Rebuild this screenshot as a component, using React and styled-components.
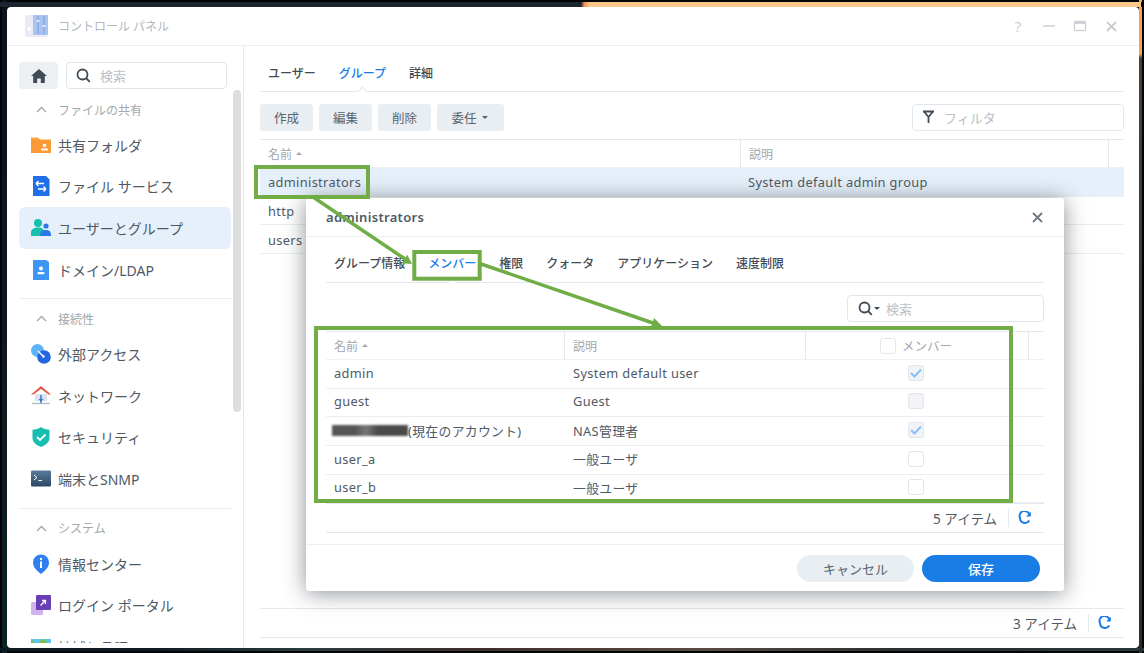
import React from "react";
import styled, { createGlobalStyle } from "styled-components";

const Global = createGlobalStyle`
  html, body { margin: 0; padding: 0; background: #000; }
  * { box-sizing: border-box; }
  body { font-family: "Noto Sans", "Noto Sans CJK JP", sans-serif; }
`;

const line = "#e3e9ef";
const textColor = "#4f5964";
const blue = "#1a7de6";
const green = "#70ad47";

const Desktop = styled.div`
  position: relative;
  width: 1144px;
  height: 653px;
  overflow: hidden;
  padding: 7px 5px 5px 7px;
  background:
    linear-gradient(90deg, #1c2430 0 581px, #f08a4a 584px, #fac98a 590px 1141px, #000 1141px) 0 2px / 100% 5px no-repeat,
    linear-gradient(180deg, #f2a45e 0 54px, #4a4038 58px, #2c2c30 100%) 1139px 0 / 3px 100% no-repeat,
    linear-gradient(90deg, #0e1a22 0 150px, #2a3c40 300px, #40302c 480px, #5a4c44 700px, #2c3030 900px, #28383c 100%) 0 648px / 100% 3px no-repeat,
    linear-gradient(180deg, #0b1220, #0e2028) 2px 0 / 5px 100% no-repeat,
    #020304;
`;

const Win = styled.div`
  position: relative;
  width: 1132px;
  height: 641px;
  background: #fff;
  border-radius: 4px;
  display: flex;
  flex-direction: column;
  overflow: hidden;
`;

const TitleBar = styled.header`
  height: 39px;
  flex: none;
  display: flex;
  align-items: center;
  padding: 0 20px 0 18px;
  border-bottom: 1px solid #eceff3;
`;
const TitleText = styled.span`
  margin-left: 10px;
  font-size: 12px;
  color: #b4b8bd;
  flex: 1;
`;
const WinButtons = styled.div`
  display: flex;
  align-items: center;
  gap: 15px;
`;
const WinBtn = styled.span`
  width: 16px;
  display: flex;
  justify-content: center;
  font-size: 15px;
  color: #cdd1d5;
`;

const Body = styled.div`
  flex: 1;
  display: flex;
  min-height: 0;
`;

const Sidebar = styled.aside`
  position: relative;
  width: 237px;
  flex: none;
  border-right: 1px solid ${line};
  display: flex;
  flex-direction: column;
  padding-bottom: 5px;
`;
const SideTop = styled.div`
  display: flex;
  gap: 8px;
  padding: 16px 16px 7px 12px;
`;
const HomeBtn = styled.div`
  width: 39px;
  height: 27px;
  border-radius: 4px;
  background: #ecf0f3;
  display: flex;
  align-items: center;
  justify-content: center;
`;
const SearchBox = styled.div`
  flex: ${p => (p.$w ? "none" : 1)};
  width: ${p => (p.$w ? p.$w + "px" : "auto")};
  height: 27px;
  border: 1.5px solid #dfe6ec;
  border-radius: 4px;
  display: flex;
  align-items: center;
  gap: ${p => p.$gap || 8}px;
  padding-left: ${p => p.$pad || 9}px;
  padding-bottom: 1px;
  font-size: 13px;
  color: #bcc0c4;
  background: #fff;
`;
const Nav = styled.nav`
  flex: 1;
  min-height: 0;
  overflow: hidden;
  padding: 0 12px;
`;
const ScrollThumb = styled.div`
  position: absolute;
  right: 2px;
  top: 44px;
  width: 8px;
  height: 322px;
  border-radius: 4px;
  background: #dedede;
`;
const Group = styled.section`
  padding-bottom: 8px;
  margin-bottom: 6px;
  border-bottom: 1px solid #e8edf2;
`;
const GroupHead = styled.div`
  height: 27px;
  margin-bottom: 1px;
  display: flex;
  align-items: center;
  gap: 11px;
  padding-left: 17px;
  font-size: 12px;
  color: #a3a8ad;
`;
const Item = styled.div`
  height: 41.6px;
  display: flex;
  align-items: center;
  gap: 7px;
  padding-left: 12px;
  border-radius: 6px;
  font-size: 14px;
  color: ${textColor};
  background: ${p => (p.$active ? "#e6f0fa" : "transparent")};
`;

const Main = styled.main`
  flex: 1;
  min-width: 0;
  display: flex;
  flex-direction: column;
  padding: 0 15px 10px 16px;
`;
const Tabs = styled.div`
  height: 46px;
  flex: none;
  display: flex;
  align-items: stretch;
  gap: 23px;
  padding: ${p => p.$pt}px 0 0 8px;
  border-bottom: 1px solid ${line};
`;
const Tab = styled.div`
  position: relative;
  display: flex;
  align-items: center;
  font-size: 12px;
  font-weight: 500;
  color: ${p => (p.$active ? blue : "#414b55")};
  &::after {
    content: "";
    display: ${p => (p.$active ? "block" : "none")};
    position: absolute;
    left: 50%;
    bottom: -4px;
    width: 6px;
    height: 6px;
    margin-left: -3px;
    background: #fff;
    border-top: 1px solid ${line};
    border-left: 1px solid ${line};
    transform: rotate(45deg);
  }
`;
const Toolbar = styled.div`
  flex: none;
  margin-top: 12px;
  display: flex;
  gap: 6px;
  justify-content: flex-start;
`;
const ToolBtn = styled.div`
  height: 27px;
  width: ${p => p.$w || 53}px;
  border-radius: 3px;
  background: #e9eef2;
  display: flex;
  align-items: center;
  justify-content: center;
  gap: 5px;
  padding-right: ${p => (p.$w ? 2 : 0)}px;
  font-size: 12.5px;
  color: #59636d;
`;
const Push = styled.div`
  flex: 1;
`;
const Caret = styled.i`
  display: inline-block;
  width: 0;
  height: 0;
  border-left: 3.5px solid transparent;
  border-right: 3.5px solid transparent;
  ${p => (p.$up ? "border-bottom" : "border-top")}: 3.5px solid ${p => p.$c || "#59636d"};
  margin-left: ${p => p.$ml || 0}px;
  vertical-align: middle;
`;

const Grid = styled.div`
  flex: ${p => (p.$fill ? 1 : "none")};
  margin-top: ${p => p.$mt}px;
  border-top: 1px solid ${line};
  min-height: 0;
`;
const HeadRow = styled.div`
  height: 28px;
  display: grid;
  grid-template-columns: ${p => p.$cols};
  border-bottom: 1px solid #eef1f5;
`;
const HeadCell = styled.div`
  display: flex;
  align-items: center;
  justify-content: ${p => (p.$center ? "center" : "flex-start")};
  gap: ${p => (p.$center ? 6 : 0)}px;
  padding-left: ${p => (p.$center ? 0 : 8)}px;
  padding-right: ${p => (p.$center ? 2 : 0)}px;
  font-size: ${p => (p.$center ? 12.5 : 12)}px;
  color: #a3a8ad;
  & + & {
    border-left: 1px solid ${line};
  }
`;
const Row = styled.div`
  height: 28.67px;
  display: grid;
  grid-template-columns: ${p => p.$cols};
  align-items: center;
  padding-top: ${p => p.$pt || 0}px;
  padding-bottom: ${p => p.$pb || 0}px;
  font-size: 12.8px;
  letter-spacing: 0.35px;
  color: ${textColor};
  background: ${p => (p.$selected ? "#e6f0fa" : "transparent")};
  border-bottom: 1px solid #eaeef2;
`;
const Cell = styled.div`
  padding-left: ${p => p.$pad || 8}px;
  padding-right: ${p => (p.$center ? 3 : 0)}px;
  white-space: nowrap;
  display: flex;
  align-items: center;
  justify-content: ${p => (p.$center ? "center" : "flex-start")};
`;
const Redacted = styled.span`
  display: inline-block;
  width: 76px;
  height: 11px;
  margin-left: -2px;
  background: linear-gradient(90deg, #555 0 30%, #777 45%, #4a4a4a 60% 100%);
  filter: blur(1.2px);
`;
const GridFooter = styled.div`
  flex: none;
  height: 30px;
  border-top: 1px solid ${line};
  border-bottom: 1px solid ${line};
  display: flex;
  align-items: center;
  justify-content: flex-end;
  padding-right: 12px;
  font-size: 13.5px;
  color: ${textColor};
`;
const FooterSep = styled.span`
  width: 1px;
  height: 18px;
  margin: 0 9px 0 11px;
  background: ${line};
`;

const Dialog = styled.div`
  position: absolute;
  left: 299px;
  top: 191px;
  width: 758px;
  height: 393px;
  background: #fff;
  border-radius: 3px;
  box-shadow: 0 2px 22px rgba(40, 50, 60, 0.55);
  display: flex;
  flex-direction: column;
`;
const DialogHead = styled.div`
  flex: none;
  height: 39px;
  display: flex;
  align-items: center;
  justify-content: space-between;
  padding: 0 21px 0 20px;
  border-bottom: 1px solid #eceff3;
  font-size: 13px;
  letter-spacing: 0.3px;
  font-weight: 600;
  color: #4f5964;
`;
const DialogBody = styled.div`
  flex: none;
  padding: 0 20px;
`;
const DialogSearchRow = styled.div`
  display: flex;
  justify-content: flex-end;
  margin-top: 12px;
`;
const DialogFoot = styled.div`
  flex: none;
  margin-top: 11px;
  padding: 10px 24px 0 0;
  border-top: 1px solid #eceff3;
  display: flex;
  justify-content: flex-end;
  gap: 8px;
`;
const Pill = styled.div`
  width: ${p => p.$w}px;
  height: 27px;
  padding-bottom: 1px;
  border-radius: 14px;
  display: flex;
  align-items: center;
  justify-content: center;
  font-size: 13px;
  font-weight: ${p => (p.$primary ? 500 : 400)};
  color: ${p => (p.$primary ? "#fff" : "#59636d")};
  background: ${p => (p.$primary ? blue : "#e9eef2")};
`;
const Box = styled.span`
  width: 16px;
  height: 16px;
  flex: none;
  border: 1.5px solid ${p => (p.$plain ? "#e2e8ee" : "#e0e6ec")};
  border-radius: 3px;
  background: ${p => (p.$disabled ? "#f1f3f7" : "#fff")};
  display: flex;
  align-items: center;
  justify-content: center;
`;
const Overlay = styled.svg`
  position: absolute;
  left: 0;
  top: 0;
  pointer-events: none;
`;

const S = ({ size = 20, children, ...r }) => (
  <svg width={size} height={size} viewBox="0 0 20 20" style={{ flex: "none" }} {...r}>{children}</svg>
);

const FolderIcon = () => (
  <S><path d="M0 2.500h7l2 2h11v13.500H0z" fill="#f9a63f" /><path d="M0 5h9l2 0h9v13H0z" fill="#fb9a35" />
    <circle cx="13.500" cy="10.500" r="1.800" fill="#fff" /><rect x="10" y="13.500" width="7" height="2" rx=".8" fill="#fff" /></S>
);
const FileSvcIcon = () => (
  <S><path d="M2 0h13l3.500 3.500V20H2z" fill="#1f6fe8" /><path d="M5 7.500h8M5 7.500l2.500-2.500M5 7.500l2.500 2.500M15 13H7M15 13l-2.500-2.500M15 13l-2.500 2.500" stroke="#fff" strokeWidth="1.400" fill="none" /></S>
);
const UsersIcon = () => (
  <S><circle cx="7" cy="5" r="4" fill="#16bfae" /><path d="M0 18v-3.500C0 11 3 9.500 7 9.500s6 1.500 7 5V18z" fill="#16bfae" />
    <circle cx="15" cy="8" r="2.600" fill="#2b79e8" /><path d="M9 18c0-4 2-6 6-6s5 2 5 6z" fill="#2b79e8" /></S>
);
const DomainIcon = () => (
  <S><path d="M2 0h13l3 2v18H2z" fill="#3e96f4" /><circle cx="10" cy="8.500" r="2" fill="#fff" /><rect x="6.500" y="12" width="7" height="2.200" rx="1" fill="#fff" /></S>
);
const ExternalIcon = () => (
  <S><circle cx="6.500" cy="6.500" r="6.500" fill="#5cb4f7" /><circle cx="13" cy="13" r="6.800" fill="#2366e0" /><path d="M7 7l6 6" stroke="#fff" strokeWidth="1.500" /><circle cx="12.500" cy="12.500" r="1.200" fill="#fff" /></S>
);
const NetworkIcon = () => (
  <S><path d="M4 8h12v7H4z" fill="#dfe2e6" /><path d="M10 0L20 8.500h-2.500L10 3 2.500 8.500H0z" fill="#e25a4c" /><path d="M10 9v8" stroke="#2b79e8" strokeWidth="1.500" /><path d="M7.500 13h5l-2.500 3z" fill="#2b79e8" /><path d="M1 17.500h18" stroke="#b6bcc4" strokeWidth="1.400" /></S>
);
const ShieldIcon = () => (
  <S><path d="M10 0c2.500 1.800 5.500 2.600 8.500 2.800V11c0 4.200-4 7.200-8.500 9-4.500-1.800-8.500-4.800-8.500-9V2.800C4.500 2.600 7.500 1.800 10 0z" fill="#18bfb1" /><path d="M6 10l3 3 5.500-5.500" stroke="#fff" strokeWidth="1.800" fill="none" /></S>
);
const TerminalIcon = () => (
  <svg width="20" height="17" viewBox="0 0 20 17" style={{ flex: "none" }}>
    <defs><linearGradient id="tg" x1="0" y1="0" x2="0" y2="1"><stop offset="0" stopColor="#5b7a99" /><stop offset="1" stopColor="#2d4866" /></linearGradient></defs>
    <rect width="20" height="16" y=".5" rx="1" fill="url(#tg)" /><path d="M3 5l3 2.500-3 2.500M7.500 10.500H11" stroke="#fff" strokeWidth="1" fill="none" />
  </svg>
);
const InfoIcon = () => (
  <S><path d="M10 20C6 16.500 2 13.500 2 8.500a8 8 0 0116 0c0 5-4 8-8 11.500z" fill="#2d7ff0" /><rect x="9" y="7.500" width="2" height="6.500" fill="#fff" /><circle cx="10" cy="5" r="1.200" fill="#fff" /></S>
);
const PortalIcon = () => (
  <S><rect x="0" y="7" width="12" height="13" rx="1.500" fill="#cfb4ee" /><rect x="5" y="0" width="15" height="15" rx="1" fill="#6a3fb5" /><path d="M9.500 10.500l5-5M11 5.500h3.500V9" stroke="#fff" strokeWidth="1.300" fill="none" /></S>
);
const RegionIcon = () => (
  <S><rect y="2" width="20" height="18" fill="#7ac143" /><path d="M0 2l6 7 5-7zM13 2h7v8z" fill="#63c3ef" /></S>
);
const Chevron = () => (
  <svg width="11" height="7" viewBox="0 0 11 7" style={{ flex: "none" }}><path d="M1 6l4.500-4.500L10 6" stroke="#a3a8ad" strokeWidth="1.400" fill="none" /></svg>
);
const SearchIcon = () => (
  <svg width="15" height="15" viewBox="0 0 15 15" style={{ flex: "none" }}><circle cx="6.500" cy="6.500" r="5" stroke="#414b55" strokeWidth="1.800" fill="none" /><path d="M10 10l3.800 3.800" stroke="#414b55" strokeWidth="1.800" /></svg>
);
const CloseIcon = ({ c = "#c8ccd0", s = 11 }) => (
  <svg width={s} height={s} viewBox="0 0 11 11" style={{ flex: "none" }}><path d="M1 1l9 9M10 1l-9 9" stroke={c} strokeWidth="1.800" /></svg>
);
const Refresh = () => (
  <svg width="14" height="14" viewBox="0 0 14 14" style={{ flex: "none" }}><path d="M11.500 4.200A5 5 0 102 7a5 5 0 009.300 2.500" stroke={blue} strokeWidth="2" fill="none" /><path d="M12.800 0.800v4.700H8.200z" fill={blue} /></svg>
);
const Check = () => (
  <svg width="12" height="10" viewBox="0 0 12 10"><path d="M1 5l3.500 3.500L11 1.500" stroke="#8cc0f5" strokeWidth="2" fill="none" /></svg>
);

const groups = [
  { title: "ファイルの共有", items: [["共有フォルダ", FolderIcon], ["ファイル サービス", FileSvcIcon], ["ユーザーとグループ", UsersIcon, true], ["ドメイン/LDAP", DomainIcon]] },
  { title: "接続性", items: [["外部アクセス", ExternalIcon], ["ネットワーク", NetworkIcon], ["セキュリティ", ShieldIcon], ["端末とSNMP", TerminalIcon]] },
  { title: "システム", items: [["情報センター", InfoIcon], ["ログイン ポータル", PortalIcon], ["地域と言語", RegionIcon]] },
];
const mainCols = "480px 368px 1fr";
const dlgCols = "238px 241px 223px 1fr";
const groupsRows = [["administrators", "System default admin group", true], ["http", ""], ["users", ""]];
const members = [
  { n: "admin", d: "System default user", checked: true, disabled: true },
  { n: "guest", d: "Guest", disabled: true },
  { n: "(現在のアカウント)", d: "NAS管理者", checked: true, disabled: true, hidden: true },
  { n: "user_a", d: "一般ユーザ" },
  { n: "user_b", d: "一般ユーザ" },
];

export default function App() {
  return (
    <Desktop>
      <Global />
      <Win>
        <TitleBar>
          <svg width="23" height="22" viewBox="0 0 23 22" style={{ flex: "none" }}>
            <rect width="23" height="22" rx="2" fill="#e9ecf6" />
            <rect x="8" width="15" height="20" rx="1" fill="#a9c4f0" />
            <path d="M13 1v18M19 1v18" stroke="#7d9fdc" strokeWidth="1" />
            <rect x="11.500" y="5" width="3" height="2" fill="#dfe8fa" /><rect x="17.500" y="10" width="3" height="2" fill="#dfe8fa" />
            <circle cx="4" cy="14" r="2" fill="#fff" />
          </svg>
          <TitleText>コントロール パネル</TitleText>
          <WinButtons>
            <WinBtn>?</WinBtn>
            <WinBtn><svg width="16" height="12" viewBox="0 0 16 12"><path d="M2 6h12" stroke="#cdd1d5" strokeWidth="1.600" /></svg></WinBtn>
            <WinBtn><svg width="16" height="12" viewBox="0 0 16 12"><rect x="2.500" y="1.500" width="11" height="9" fill="none" stroke="#cdd1d5" strokeWidth="1.300" /><rect x="2" y="1" width="12" height="3" fill="#cdd1d5" /></svg></WinBtn>
            <WinBtn><CloseIcon /></WinBtn>
          </WinButtons>
        </TitleBar>
        <Body>
          <Sidebar>
            <SideTop>
              <HomeBtn>
                <svg width="16" height="14" viewBox="0 0 16 14"><path d="M8 0L0 7h2.200v7h4V9.500h3.600V14h4V7H16z" fill="#414b55" /></svg>
              </HomeBtn>
              <SearchBox $gap={9}><SearchIcon />検索</SearchBox>
            </SideTop>
            <Nav>
              {groups.map(g => (
                <Group key={g.title}>
                  <GroupHead><Chevron />{g.title}</GroupHead>
                  {g.items.map(([label, Icon, active]) => (
                    <Item key={label} $active={active}><Icon />{label}</Item>
                  ))}
                </Group>
              ))}
            </Nav>
            <ScrollThumb />
          </Sidebar>
          <Main>
            <Tabs $pt={9}>
              <Tab>ユーザー</Tab>
              <Tab $active>グループ</Tab>
              <Tab>詳細</Tab>
            </Tabs>
            <Toolbar>
              <ToolBtn>作成</ToolBtn>
              <ToolBtn>編集</ToolBtn>
              <ToolBtn>削除</ToolBtn>
              <ToolBtn $w={67}>委任<Caret /></ToolBtn>
              <Push />
              <SearchBox $w={212} $gap={9}>
                <svg width="13" height="14" viewBox="0 0 13 14" style={{ flex: "none" }}><path d="M1 1.500h11M2 1.500l4.500 5.500M11 1.500L6.500 7M6.500 6.500V13" stroke="#414b55" strokeWidth="1.800" fill="none" /></svg>
                フィルタ
              </SearchBox>
            </Toolbar>
            <Grid $fill $mt={8}>
              <HeadRow $cols={mainCols}>
                <HeadCell>名前<Caret $up $c="#a3a8ad" $ml={4} /></HeadCell>
                <HeadCell>説明</HeadCell>
                <HeadCell />
              </HeadRow>
              {groupsRows.map(([n, d, sel]) => (
                <Row key={n} $cols={mainCols} $selected={sel} $pt={1}>
                  <Cell>{n}</Cell>
                  <Cell>{d}</Cell>
                </Row>
              ))}
            </Grid>
            <GridFooter>3 アイテム<FooterSep /><Refresh /></GridFooter>
          </Main>
        </Body>
        <Dialog>
          <DialogHead>administrators<CloseIcon c="#6f7882" /></DialogHead>
          <DialogBody>
            <Tabs $pt={7}>
              <Tab>グループ情報</Tab>
              <Tab $active>メンバー</Tab>
              <Tab>権限</Tab>
              <Tab>クォータ</Tab>
              <Tab>アプリケーション</Tab>
              <Tab>速度制限</Tab>
            </Tabs>
            <DialogSearchRow>
              <SearchBox $w={197} $gap={6} $pad={10}>
                <SearchIcon /><Caret $c="#414b55" $ml={-5} />検索
              </SearchBox>
            </DialogSearchRow>
            <Grid $mt={9}>
              <HeadRow $cols={dlgCols}>
                <HeadCell>名前<Caret $up $c="#a3a8ad" $ml={4} /></HeadCell>
                <HeadCell>説明</HeadCell>
                <HeadCell $center><Box $plain />メンバー</HeadCell>
                <HeadCell />
              </HeadRow>
              {members.map(m => (
                <Row key={m.n} $cols={dlgCols} $pb={2}>
                  <Cell>{m.hidden && <Redacted />}{m.n}</Cell>
                  <Cell $pad={9}>{m.d}</Cell>
                  <Cell $center $pad={1}>
                    <Box $disabled={m.disabled}>{m.checked && <Check />}</Box>
                  </Cell>
                </Row>
              ))}
            </Grid>
            <GridFooter>5 アイテム<FooterSep /><Refresh /></GridFooter>
          </DialogBody>
          <DialogFoot>
            <Pill $w={117}>キャンセル</Pill>
            <Pill $w={118} $primary>保存</Pill>
          </DialogFoot>
        </Dialog>
      </Win>
      <Overlay width="1144" height="653" viewBox="0 0 1144 653">
        <g fill="none" stroke={green} strokeWidth="4">
          <rect x="256" y="167" width="112" height="30" />
          <rect x="414.300" y="252" width="65.400" height="26.700" />
          <rect x="316" y="328" width="695" height="173" />
        </g>
        <g stroke={green} strokeWidth="3.500">
          <path d="M313 197L405 259" />
          <path d="M481 264L653 323" />
        </g>
        <g fill={green}>
          <polygon points="412,264 401.700,263.200 407.300,254.800" />
          <polygon points="662,326 650.900,327.500 654.100,318.100" />
        </g>
      </Overlay>
    </Desktop>
  );
}
